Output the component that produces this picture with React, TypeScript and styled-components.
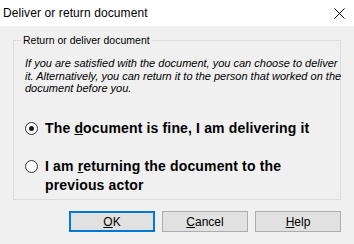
import styled, { createGlobalStyle } from 'styled-components';

const GlobalStyle = createGlobalStyle`
  html, body {
    margin: 0;
    padding: 0;
    background: #f0f0f0;
  }
`;

const Window = styled.div`
  width: 354px;
  height: 244px;
  display: flex;
  flex-direction: column;
  background: #f0f0f0;
  font-family: 'Liberation Sans', Arial, sans-serif;
  color: #000;
  overflow: hidden;
`;

const TitleBar = styled.div`
  height: 26px;
  flex: none;
  background: #fff;
  display: flex;
  align-items: center;
  justify-content: space-between;
  padding: 0 7px 0 3px;
`;

const Title = styled.span`
  font-size: 12px;
  letter-spacing: 0.1px;
`;

const CloseIcon = styled.svg`
  width: 11px;
  height: 11px;
  margin-right: 2px;
`;

const Body = styled.div`
  flex: 1;
  display: flex;
  flex-direction: column;
  padding: 8px 13px 0 13px;
`;

const Group = styled.fieldset`
  margin: 0;
  padding: 0 0 0 11px;
  height: 166px;
  box-sizing: border-box;
  border: 1px solid #dcdcdc;
  min-width: 0;
`;

const Legend = styled.legend`
  margin-left: -4px;
  padding: 0 2px;
  font-size: 10.5px;
  line-height: 13px;
  color: #000;
`;

const Info = styled.p`
  margin: 10px 0 0 0;
  font-size: 11px;
  line-height: 12.5px;
  font-style: italic;
  white-space: nowrap;
`;

const Options = styled.div`
  display: flex;
  flex-direction: column;
  gap: 19px;
  margin-top: 24px;
`;

const Option = styled.label`
  display: flex;
  align-items: flex-start;
  gap: 7px;
  font-size: 14px;
  letter-spacing: 0.15px;
  font-weight: bold;
  line-height: 19px;
`;

const Radio = styled.span<{ $checked?: boolean }>`
  flex: none;
  width: 13px;
  height: 13px;
  margin-top: 3px;
  border: 1px solid #333;
  border-radius: 50%;
  background: #fff;
  box-sizing: border-box;
  display: flex;
  align-items: center;
  justify-content: center;

  &::after {
    content: '';
    width: 5px;
    height: 5px;
    border-radius: 50%;
    background: ${(p) => (p.$checked ? '#1a1a1a' : 'transparent')};
  }
`;

const Buttons = styled.div`
  display: flex;
  justify-content: flex-end;
  gap: 7px;
  margin-top: 11px;
`;

const Button = styled.button<{ $primary?: boolean }>`
  width: 86px;
  height: 21px;
  padding: 0;
  box-sizing: border-box;
  background: #e1e1e1;
  border: ${(p) => (p.$primary ? '2px solid #0078d7' : '1px solid #adadad')};
  font-family: 'Liberation Sans', Arial, sans-serif;
  font-size: 12px;
  color: #000;
`;

export default function App() {
  return (
    <Window>
      <GlobalStyle />
      <TitleBar>
        <Title>Deliver or return document</Title>
        <CloseIcon viewBox="0 0 11 11">
          <path d="M0.5 0.5 L10.5 10.5 M10.5 0.5 L0.5 10.5" stroke="#000" strokeWidth="1" fill="none" />
        </CloseIcon>
      </TitleBar>
      <Body>
        <Group>
          <Legend>Return or deliver document</Legend>
          <Info>
            If you are satisfied with the document, you can choose to deliver
            <br />
            it. Alternatively, you can return it to the person that worked on the
            <br />
            document before you.
          </Info>
          <Options>
            <Option>
              <Radio $checked />
              <span>
                The <u>d</u>ocument is fine, I am delivering it
              </span>
            </Option>
            <Option>
              <Radio />
              <span>
                I am <u>r</u>eturning the document to the
                <br />
                previous actor
              </span>
            </Option>
          </Options>
        </Group>
        <Buttons>
          <Button $primary>
            <u>O</u>K
          </Button>
          <Button>
            <u>C</u>ancel
          </Button>
          <Button>
            <u>H</u>elp
          </Button>
        </Buttons>
      </Body>
    </Window>
  );
}
